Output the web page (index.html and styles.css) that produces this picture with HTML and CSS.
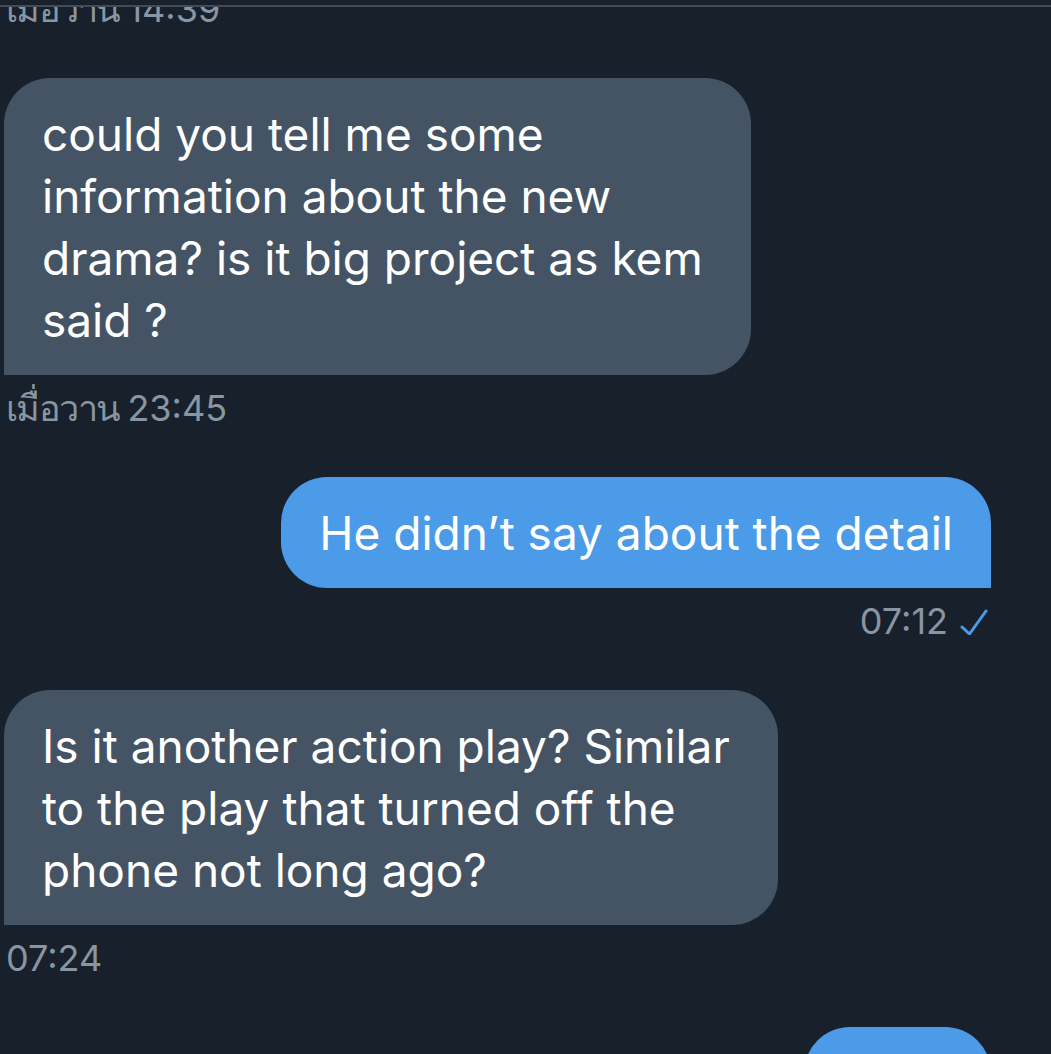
FILE: index.html
```html
<!DOCTYPE html>
<html lang="th">
<head>
<meta charset="utf-8">
<title>Messages</title>
<link rel="stylesheet" href="styles.css">
</head>
<body>
<div class="topbar"></div>
<main class="chat">
  <div class="stamp stamp-in stamp-first"><span class="thai">เมื่อวาน</span> 14:39</div>

  <div class="bubble bubble-in">could you tell me some<br>information about the new<br>drama? is it big project as kem<br>said ?</div>
  <div class="stamp stamp-in"><span class="thai">เมื่อวาน</span> 23:45</div>

  <div class="bubble bubble-out">He didn’t say about the detail</div>
  <div class="stamp stamp-out">07:12
    <svg class="check" viewBox="0 0 28 28" width="28" height="28" aria-hidden="true"><path d="M2 20 L9.5 27 L26 4" fill="none" stroke="#4c9be8" stroke-width="3" stroke-linecap="round" stroke-linejoin="round"/></svg>
  </div>

  <div class="bubble bubble-in">Is it another action play? Similar<br>to the play that turned off the<br>phone not long ago?</div>
  <div class="stamp stamp-in">07:24</div>

  <div class="bubble bubble-out">Okay</div>
</main>
</body>
</html>
```

FILE: styles.css
```css
html, body {
  margin: 0;
  padding: 0;
  background: #18202b;
  height: 100%;
  overflow: hidden;
}

body {
  font-family: Inter, "Noto Sans", "DejaVu Sans", sans-serif;
  color: #ffffff;
}

.topbar {
  position: absolute;
  top: 0;
  left: 0;
  right: 0;
  height: 5px;
  background: #18202b;
  border-bottom: 2px solid #424b58;
  z-index: 2;
}

.chat {
  display: flex;
  flex-direction: column;
  padding: 0 60px 0 4px;
}

.bubble {
  font-size: 46px;
  line-height: 62px;
  padding: 25px 48px 24px 38px;
  border-radius: 46px;
  width: fit-content;
  margin-top: 49px;
}

.bubble-in {
  background: #445464;
  border-bottom-left-radius: 0;
  align-self: flex-start;
}

.bubble-out {
  background: #4c9be8;
  border-bottom-right-radius: 0;
  align-self: flex-end;
  padding-right: 38px;
}

.stamp {
  font-size: 36px;
  line-height: 40px;
  color: #8895a3;
  margin-top: 13px;
  display: flex;
  align-items: center;
  gap: 12px;
}

.thai {
  letter-spacing: -1.6px;
  margin-right: -4px;
}

.stamp-in {
  align-self: flex-start;
  padding-left: 2px;
}

.stamp-out {
  align-self: flex-end;
  padding-right: 3px;
}

.stamp-first {
  margin-top: -11px;
}

.check {
  display: block;
}
```
